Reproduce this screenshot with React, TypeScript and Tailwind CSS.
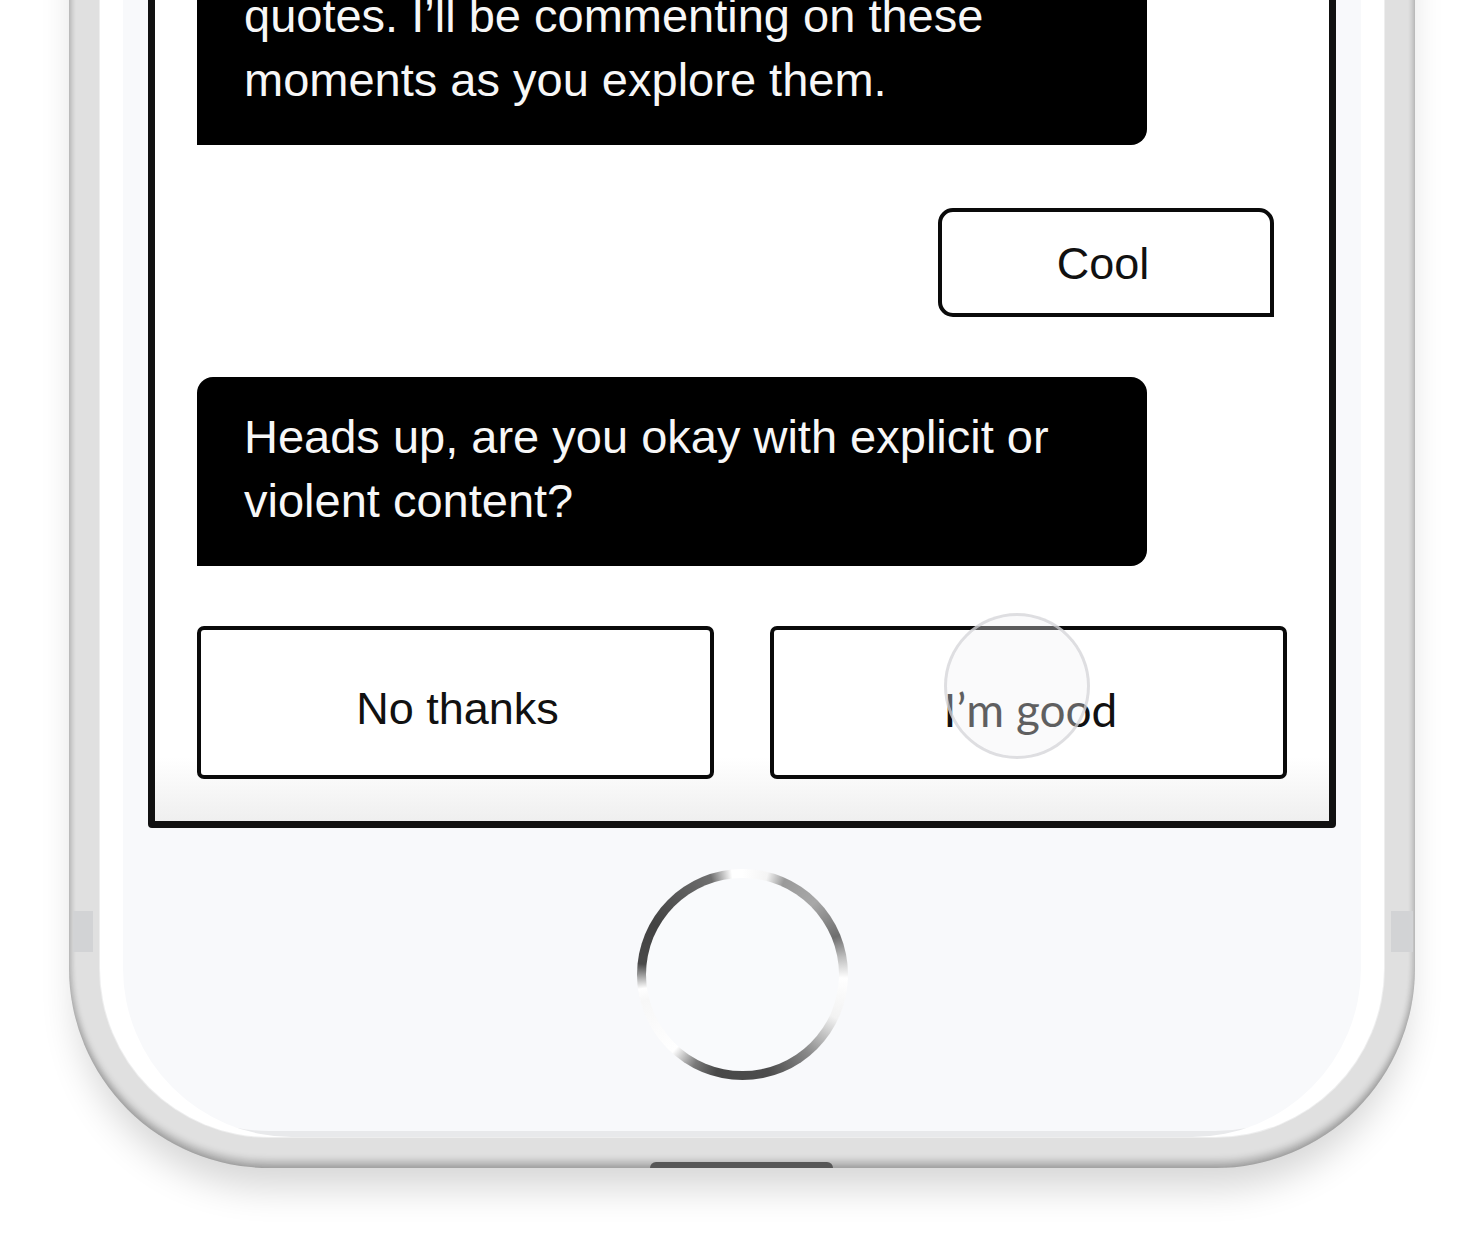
export default function App() {
  const sans = { fontFamily: '"Liberation Sans", Arial, sans-serif' };
  return (
    <div className="w-[1484px] h-[1258px] overflow-hidden bg-white" style={sans}>
      <div className="relative ml-[69px] -mt-[193px] w-[1346px]">
        {/* phone body with silver rail */}
        <div className="rounded-b-[200px] bg-[#e0e0e0] pt-0 px-[31px] pb-[31px] shadow-[0_28px_36px_-8px_rgba(0,0,0,0.16),inset_3px_0_5px_rgba(0,0,0,0.09),inset_-3px_0_5px_rgba(0,0,0,0.09),inset_0_-7px_7px_rgba(0,0,0,0.22)]">
          {/* face */}
          <div className="rounded-b-[169px] bg-[#f8f9fb] pt-[100px] px-[48px] pb-[57px] flex flex-col items-center shadow-[inset_23px_0_0_#ffffff,inset_-23px_0_0_#ffffff,inset_0_-6px_0_#e8e9eb,0_0_0_1px_#eeeeee]">
            {/* screen */}
            <div className="w-full border-[7px] border-[#111111] rounded-b-[4px] bg-[linear-gradient(180deg,#ffffff_93%,#efefef_100%)] px-[42px] pt-[42px] pb-[42px] flex flex-col">
              {/* bubble 1 */}
              <div className="w-[950px] bg-black text-[#f7f7f7] rounded-[16px] rounded-bl-none pl-[47px] pr-[30px] pt-[28px] pb-[33px] text-[47px] leading-[64px]">
                quotes. I’ll be commenting on these
                <br />
                moments as you explore them.
              </div>
              {/* Cool reply */}
              <div className="self-end mr-[13px] mt-[63px] w-[336px] h-[109px] border-[4px] border-[#0a0a0a] rounded-[15px] rounded-br-none flex items-center justify-center text-[45px] text-[#111111] bg-white">
                <span className="pt-[2px] pr-[6px]">Cool</span>
              </div>
              {/* bubble 2 */}
              <div className="mt-[60px] w-[950px] bg-black text-[#f7f7f7] rounded-[16px] rounded-bl-none pl-[47px] pr-[30px] pt-[28px] pb-[33px] text-[47px] leading-[64px]">
                Heads up, are you okay with explicit or
                <br />
                violent content?
              </div>
              {/* choices */}
              <div className="mt-[60px] grid grid-cols-2 gap-[56px]">
                <div className="h-[153px] border-[4px] border-[#0a0a0a] rounded-[7px] bg-white flex items-center justify-center text-[45px] text-[#111111]">
                  <span className="pt-[12px] pl-[4px]">No thanks</span>
                </div>
                <div className="relative h-[153px] border-[4px] border-[#0a0a0a] rounded-[7px] bg-white flex items-center justify-center text-[46px] text-[#111111]" style={{ fontFamily: 'Lato, "Liberation Sans", sans-serif' }}>
                  <span className="pt-[14px] pl-[4px]">I’m good</span>
                  <div className="absolute left-[170px] top-[-17px] w-[146px] h-[146px] rounded-full bg-[rgba(240,240,244,0.35)] border-[3px] border-[rgba(210,210,214,0.7)] blur-[0.6px]" />
                </div>
              </div>
            </div>
            {/* home button */}
            <div className="mt-[41px] w-[211px] h-[211px] rounded-full p-[9px] bg-[conic-gradient(from_0deg,#ffffff_0deg,#f4f4f4_14deg,#9a9a9a_24deg,#a8a8a8_45deg,#6e6e6e_68deg,#bdbdbd_80deg,#ffffff_92deg,#f2f2f2_115deg,#8a8a8a_140deg,#4c4c4c_165deg,#484848_195deg,#7a7a7a_208deg,#ffffff_222deg,#f7f7f7_255deg,#ffffff_262deg,#4a4a4a_276deg,#424242_300deg,#5a5a5a_322deg,#6f6f6f_342deg,#ffffff_354deg)] blur-[0.4px]">
              <div className="w-full h-full rounded-full bg-[#f9fafc]" />
            </div>
          </div>
        </div>
        {/* antenna lines */}
        <div className="absolute left-[4px] top-[1104px] w-[20px] h-[41px] bg-[#d2d3d5]" />
        <div className="absolute right-[2px] top-[1104px] w-[22px] h-[41px] bg-[#d2d3d5]" />
        {/* bottom port */}
        <div className="absolute bottom-0 left-[581px] w-[183px] h-[6px] bg-[#565656] rounded-t-[6px]" />
      </div>
    </div>
  );
}
